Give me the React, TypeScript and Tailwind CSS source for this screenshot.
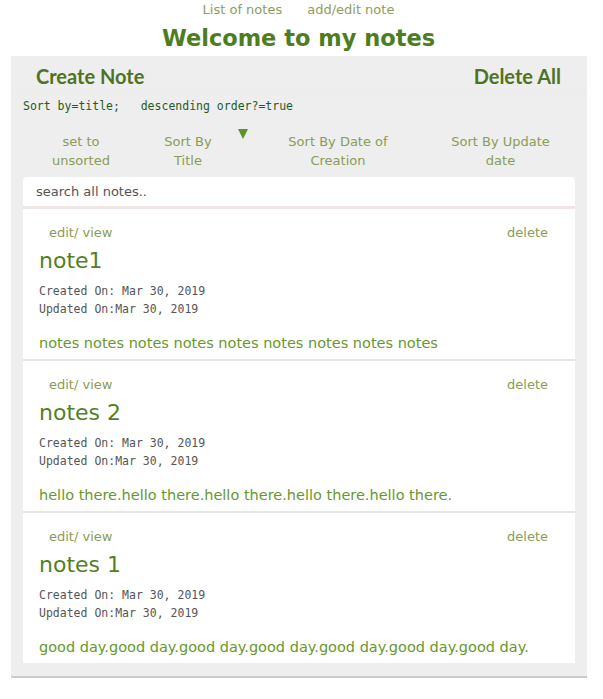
const notes = [
  { title: "note1", body: "notes notes notes notes notes notes notes notes notes" },
  { title: "notes 2", body: "hello there.hello there.hello there.hello there.hello there." },
  { title: "notes 1", body: "good day.good day.good day.good day.good day.good day.good day." },
];

const sorts = [
  { label: ["set to", "unsorted"], w: "w-[116px]" },
  { label: ["Sort By", "Title"], w: "w-[98px]" },
  { label: ["Sort By Date of", "Creation"], w: "w-[176px]" },
  { label: ["Sort By Update", "date"], w: "w-[149px]" },
];

function SortButton({ label, w }: { label: string[]; w: string }) {
  return (
    <div className={`${w} text-center text-[13px] leading-[19px] text-[#8a9c55]`}>
      {label[0]}
      <br />
      {label[1]}
    </div>
  );
}

function NoteCard({ title, body, last }: { title: string; body: string; last?: boolean }) {
  return (
    <div className={`bg-white px-4 ${last ? "h-[150px]" : "h-[152px] border-b-2 border-[#e6e6e6]"}`}>
      <div className="flex justify-between pt-[15px] pl-[10px] pr-[11px] text-[13px] leading-[18px] text-[#8a9c55]">
        <span>edit/ view</span>
        <span>delete</span>
      </div>
      <h3 className="mt-[7px] text-[22px] leading-[24px] text-[#55801f]">{title}</h3>
      <div className="mt-[9px] font-['DejaVu_Sans_Mono',monospace] text-[11.5px] leading-[18px] text-[#555]">
        <div>Created On: Mar 30, 2019</div>
        <div>Updated On:Mar 30, 2019</div>
      </div>
      <p className="mt-[16px] text-[14.5px] leading-[18px] text-[#67982b]">{body}</p>
    </div>
  );
}

export default function App() {
  return (
    <div className="font-['DejaVu_Sans',sans-serif] bg-white min-h-[699px]">
      <nav className="flex justify-center gap-[25px] pr-[6px] pt-[1px] text-[13px] leading-[18px] text-[#8f9c5c]">
        <span>List of notes</span>
        <span>add/edit note</span>
      </nav>
      <h1 className="text-center pr-[6px] text-[22.5px] leading-[38px] font-bold text-[#4e7d1e]">
        Welcome to my notes
      </h1>
      <div className="mx-[11px] mt-[-1px] w-[576px] bg-[#eeeeee] border-b-2 border-[#cccccc] pb-[13px]">
        <div className="flex justify-between items-center h-[38px] pt-[3px] pl-[25px] pr-[26px] border-b border-[#f3e9e9] font-['Lato',sans-serif] text-[20px] font-bold text-[#4f7224]">
          <span>Create Note</span>
          <span>Delete All</span>
        </div>
        <div className="pl-[12px] pt-[2px] h-[24px] font-['DejaVu_Sans_Mono',monospace] text-[11.5px] leading-[20px] text-[#1f5c1f] whitespace-pre">
          {"Sort by=title;   descending order?=true"}
        </div>
        <div className="flex pl-[12px] pt-[14px] h-[59px]">
          <SortButton {...sorts[0]} />
          <SortButton {...sorts[1]} />
          <div className="w-[13px] -mt-[3px]">
            <svg width="12" height="10" viewBox="0 0 12 10">
              <polygon points="1,0 11,0 6,10" fill="#5f9424" />
            </svg>
          </div>
          <SortButton {...sorts[2]} />
          <SortButton {...sorts[3]} />
        </div>
        <div className="mx-[12px] h-[32px] bg-white rounded-t-[4px] border-b-[3px] border-[#f1e6e6] flex items-center pl-[13px] text-[13px] text-[#555]">
          search all notes..
        </div>
        <div className="mx-[12px]">
          {notes.map((n, i) => (
            <NoteCard key={i} title={n.title} body={n.body} last={i === notes.length - 1} />
          ))}
        </div>
      </div>
    </div>
  );
}
